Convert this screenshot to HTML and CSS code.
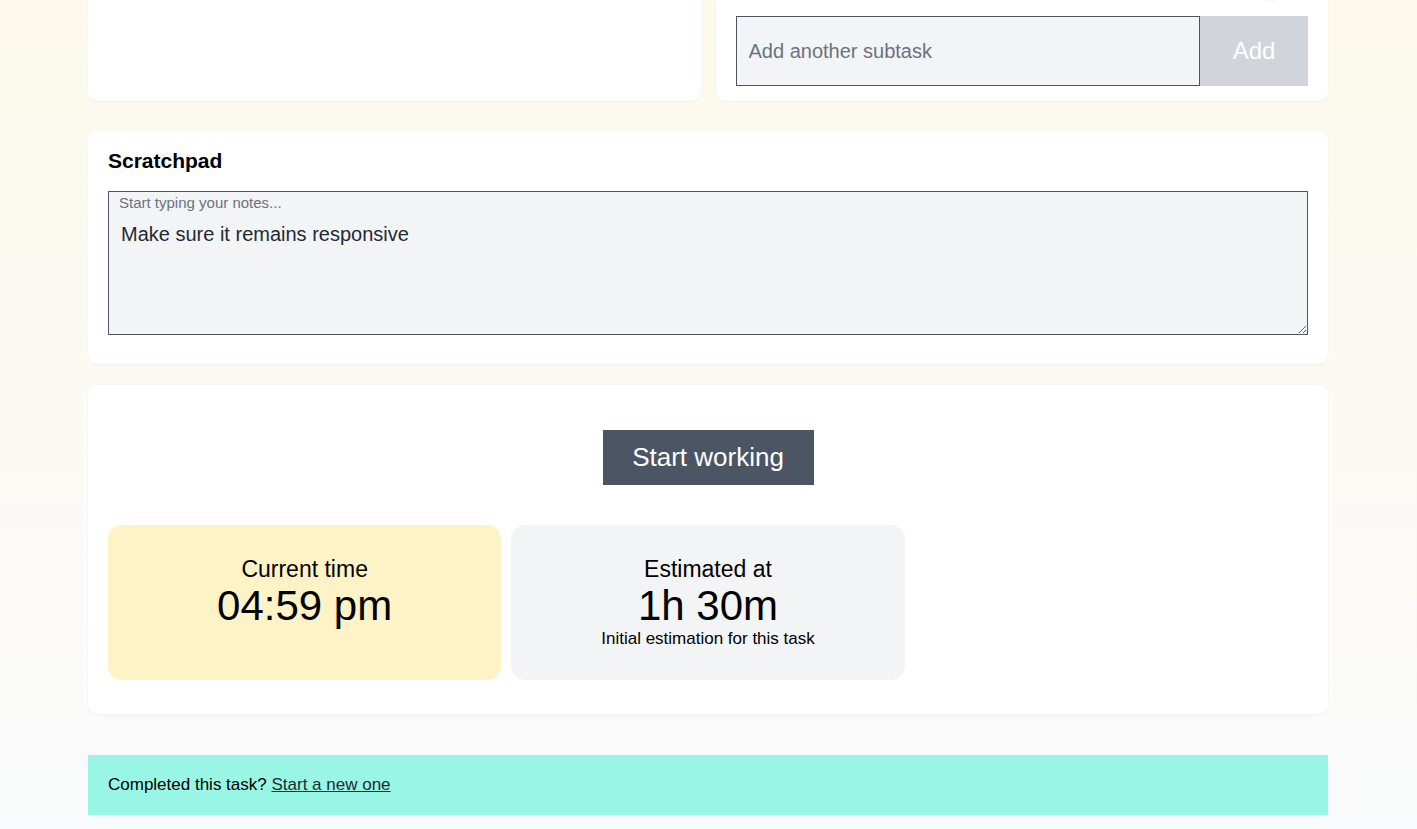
FILE: index.html
```html
<!DOCTYPE html>
<html lang="en">
<head>
    <meta charset="UTF-8">
    <meta name="viewport" content="width=device-width, initial-scale=1.0">
    <title>Focus task</title>
    <link rel="stylesheet" href="styles.css">
</head>
<body>
    <div class="page">
        <div class="top-row">
            <div class="card"></div>
            <div class="card subtasks">
                <div class="subtask-item">
                    <span class="round-btn"></span>
                </div>
                <div class="add-row">
                    <input class="add-input" type="text" placeholder="Add another subtask">
                    <button class="add-btn">Add</button>
                </div>
            </div>
        </div>

        <div class="card scratchpad">
            <h2 class="card-title">Scratchpad</h2>
            <div class="notes">
                <label class="notes-label" for="notes">Start typing your notes...</label>
                <textarea id="notes" class="notes-area">Make sure it remains responsive</textarea>
            </div>
        </div>

        <div class="card timer">
            <button class="start-btn">Start working</button>
            <div class="stats">
                <div class="stat stat-now">
                    <div class="stat-label">Current time</div>
                    <div class="stat-value">04:59 pm</div>
                </div>
                <div class="stat stat-estimate">
                    <div class="stat-label">Estimated at</div>
                    <div class="stat-value">1h 30m</div>
                    <div class="stat-note">Initial estimation for this task</div>
                </div>
            </div>
        </div>

        <div class="done-bar">
            Completed this task? <a href="#">Start a new one</a>
        </div>
    </div>
</body>
</html>
```

FILE: styles.css
```css
html, body {
    margin: 0;
    height: 100%;
}

body {
    font-family: "Liberation Sans", Arial, sans-serif;
    background: linear-gradient(#fdf9ec, #f9fafb);
    color: #000;
    overflow: hidden;
}

.page {
    width: 1240px;
    margin-top: -52px;
    margin-left: calc((100% - 1241px) / 2);
}

.card {
    background: #fff;
    border-radius: 10px;
    box-shadow: 0 1px 3px rgba(0, 0, 0, 0.04);
    box-sizing: border-box;
}

.top-row {
    display: grid;
    grid-template-columns: 1fr 1fr;
    gap: 15px;
}

.subtasks {
    padding: 20px 20px 15px;
}

.subtask-item {
    display: flex;
    justify-content: flex-end;
    height: 30px;
    margin-bottom: 18px;
    padding-right: 22px;
}

.round-btn {
    width: 30px;
    height: 30px;
    border-radius: 50%;
    background: #fff;
    box-shadow: 0 1px 4px rgba(0, 0, 0, 0.12);
}

.add-row {
    display: flex;
    height: 70px;
}

.add-input {
    flex: 1;
    box-sizing: border-box;
    height: 70px;
    border: 1px solid #4b5563;
    background: #f3f4f6;
    padding: 0 12px;
    font: 20px "Liberation Sans", Arial, sans-serif;
    color: #1f2937;
    outline: none;
}

.add-input::placeholder {
    color: #6b7280;
}

.add-btn {
    width: 108px;
    border: none;
    background: #d1d5db;
    color: #fff;
    font: 24px "Liberation Sans", Arial, sans-serif;
}

.scratchpad {
    margin-top: 30px;
    padding: 18px 20px 29px;
}

.card-title {
    margin: 0 0 18px;
    font-size: 21px;
    line-height: 24px;
    font-weight: bold;
}

.notes {
    position: relative;
    height: 144px;
}

.notes-label {
    position: absolute;
    left: 11px;
    top: 3px;
    font-size: 15px;
    color: #6b7280;
}

.notes-area {
    display: block;
    box-sizing: border-box;
    width: 100%;
    height: 144px;
    margin: 0;
    padding: 30px 12px 8px;
    border: 1px solid #4b5563;
    background: #f3f4f6;
    font: 20px/24px "Liberation Sans", Arial, sans-serif;
    color: #1f2937;
    outline: none;
}

.timer {
    margin-top: 21px;
    padding: 45px 20px 34px;
    display: flex;
    flex-direction: column;
    align-items: center;
}

.start-btn {
    width: 211px;
    height: 55px;
    border: none;
    background: #4b5563;
    color: #fff;
    font: 26px "Liberation Sans", Arial, sans-serif;
    margin-bottom: 40px;
}

.stats {
    align-self: stretch;
    display: grid;
    grid-template-columns: repeat(3, 1fr);
    gap: 10px;
}

.stat {
    height: 155px;
    box-sizing: border-box;
    padding-top: 31px;
    border-radius: 14px;
    text-align: center;
}

.stat-now {
    background: #fef2c7;
}

.stat-estimate {
    background: #f3f4f6;
}

.stat-label {
    font-size: 23px;
    line-height: 27px;
}

.stat-value {
    font-size: 42px;
    line-height: 46px;
}

.stat-note {
    font-size: 17px;
    line-height: 20px;
}

.done-bar {
    margin-top: 41px;
    padding: 20px;
    background: #99f6e4;
    font-size: 17px;
    line-height: 20px;
}

.done-bar a {
    color: #1f2937;
}
```
